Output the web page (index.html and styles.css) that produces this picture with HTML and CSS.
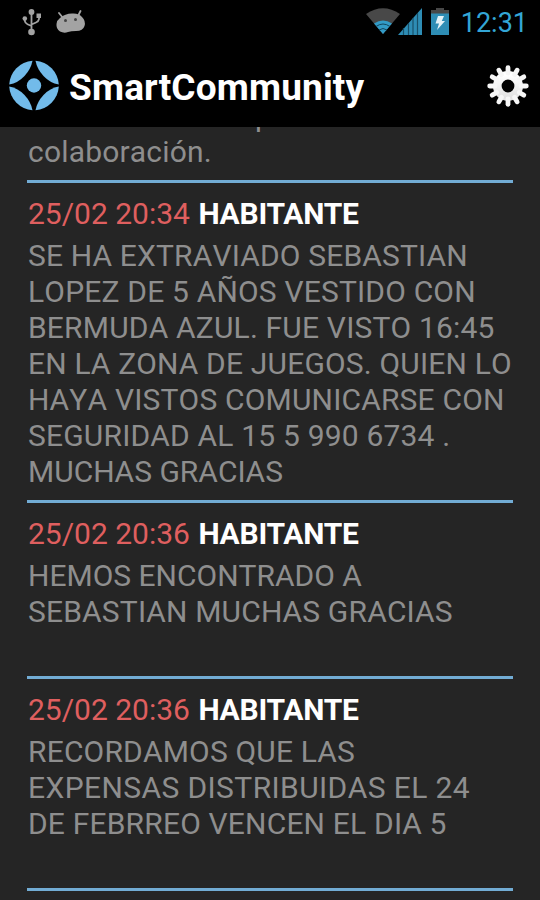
FILE: index.html
```html
<!DOCTYPE html>
<html lang="es">
<head>
    <meta charset="UTF-8">
    <meta name="viewport" content="width=device-width, initial-scale=1.0">
    <title>SmartCommunity</title>
    <link rel="stylesheet" href="styles.css">
</head>
<body>

<div class="status-bar">
    <div class="notifications">
        <svg class="usb" width="20" height="28" viewBox="0 0 20 28" fill="none" stroke="#a3a3a3" stroke-width="1.8">
            <path d="M9.500 4V24M2.800 11V13Q3 15 5.500 16.200L9.500 18M17 8V11Q16.500 13.500 14 14.500L9.500 16.500"/>
            <circle cx="9.500" cy="24" r="3.300" fill="#a3a3a3" stroke="none"/>
            <circle cx="9.500" cy="4" r="2.900" fill="#a3a3a3" stroke="none"/>
            <circle cx="2.800" cy="10.500" r="2.300" fill="#a3a3a3" stroke="none"/>
            <path d="M14.500 5.500H19V10H14.500Z" fill="#a3a3a3" stroke="none"/>
        </svg>
        <svg class="droid" width="30" height="24" viewBox="0 0 30 24">
            <path d="M3 3L7 8M24.500 1L21.500 7" stroke="#a3a3a3" stroke-width="1.800" stroke-linecap="round"/>
            <path d="M4 8Q9 3.500 16 3.500Q23 3 26 7Q30 11 28.500 16Q27 21 20 21Q15 21 12 22Q8 23.500 4 21.500Q0 19 .5 14Q1 10 4 8Z" fill="#a3a3a3"/>
            <circle cx="9.500" cy="10.500" r="1.500" fill="#444"/>
            <circle cx="19.500" cy="9.500" r="1.500" fill="#444"/>
        </svg>
    </div>
    <div class="system">
        <svg class="wifi" width="34" height="26" viewBox="0 0 34 26">
            <path d="M0 6Q17 -5.500 34 6L17 26Z" fill="#484848"/>
            <path d="M8 15.500Q17 9.500 26 15.500L17 26Z" fill="#329bc7"/>
            <path d="M10 18.500Q17 13.500 24 18.500M13 22Q17 19 21 22" fill="none" stroke="#12455c" stroke-width="1"/>
        </svg>
        <svg class="signal" width="24" height="27" viewBox="0 0 24 27">
            <path d="M0 27L24 0V27Z" fill="#2e8db5"/>
            <path d="M5.500 20V27M10.500 15V27M15 10V27M19.500 5V27" stroke="#185069" stroke-width="1.200"/>
        </svg>
        <svg class="battery" width="18" height="27" viewBox="0 0 18 27">
            <path d="M5 0H13V2H18V6H0V2H5Z" fill="#484848"/>
            <path d="M0 5.500H18V27H0Z" fill="#2e8db5"/>
            <path d="M7 8H13L10.800 13H14L6 22L8 15.500H4.500Z" fill="#e4f2f8"/>
        </svg>
        <span class="clock">12:31</span>
    </div>
</div>

<header>
    <svg class="logo" width="52" height="52" viewBox="0 0 52 52" fill="#72bbea">
        <path d="M24.500 .8A25.200 25.200 0 0 0 1.200 24.500Q10 23 16.500 16T24.500 .8Z"/>
        <path d="M27.500 .8A25.200 25.200 0 0 1 50.800 24.500Q42 23 35.500 16T27.500 .8Z"/>
        <path d="M24.500 50.200A25.200 25.200 0 0 1 1.200 26.500Q10 28 16.500 35T24.500 50.200Z"/>
        <path d="M27.500 50.200A25.200 25.200 0 0 0 50.800 26.500Q42 28 35.500 35T27.500 50.200Z"/>
        <circle cx="26" cy="25.500" r="7.200"/>
    </svg>
    <h1>SmartCommunity</h1>
    <svg class="gear" width="42" height="42" viewBox="-21 -21 42 42">
        <defs>
            <linearGradient id="metal" x1="0" y1="0" x2="0" y2="1">
                <stop offset="0" stop-color="#fff"/>
                <stop offset="1" stop-color="#e2e2e2"/>
            </linearGradient>
        </defs>
        <circle r="10.700" fill="none" stroke="url(#metal)" stroke-width="8.600"/>
        <g stroke="#f6f6f6" stroke-width="4.800" stroke-linecap="round">
            <path d="M0 -13V-18.300"/>
            <path d="M0 -13V-18.300" transform="rotate(30)"/>
            <path d="M0 -13V-18.300" transform="rotate(60)"/>
            <path d="M0 -13V-18.300" transform="rotate(90)"/>
            <path d="M0 -13V-18.300" transform="rotate(120)"/>
            <path d="M0 -13V-18.300" transform="rotate(150)"/>
            <path d="M0 -13V-18.300" transform="rotate(180)"/>
            <path d="M0 -13V-18.300" transform="rotate(210)"/>
            <path d="M0 -13V-18.300" transform="rotate(240)"/>
            <path d="M0 -13V-18.300" transform="rotate(270)"/>
            <path d="M0 -13V-18.300" transform="rotate(300)"/>
            <path d="M0 -13V-18.300" transform="rotate(330)"/>
        </g>
    </svg>
</header>

<div class="messages">
    <div class="message first">
        <p><span class="cut">p</span><br>colaboración.</p>
    </div>
    <div class="message">
        <h2><span class="date">25/02 20:34</span> <span class="author">HABITANTE</span></h2>
        <p>SE HA EXTRAVIADO SEBASTIAN<br>LOPEZ DE 5 AÑOS VESTIDO CON<br>BERMUDA AZUL. FUE VISTO 16:45<br>EN LA ZONA DE JUEGOS. QUIEN LO<br>HAYA VISTOS COMUNICARSE CON<br>SEGURIDAD AL 15 5 990 6734 .<br><span class="tight">MUCHAS GRACIAS</span></p>
    </div>
    <div class="message short">
        <h2><span class="date">25/02 20:36</span> <span class="author">HABITANTE</span></h2>
        <p><span class="tight">HEMOS ENCONTRADO A</span><br>SEBASTIAN MUCHAS GRACIAS</p>
    </div>
    <div class="message short">
        <h2><span class="date">25/02 20:36</span> <span class="author">HABITANTE</span></h2>
        <p>RECORDAMOS QUE LAS<br><span class="wide">EXPENSAS DISTRIBUIDAS EL 24</span><br>DE FEBRREO VENCEN EL DIA 5</p>
    </div>
</div>

</body>
</html>
```
FILE: styles.css
```css
body {
    font-family: Roboto, "Liberation Sans", sans-serif;
    margin: 0;
    height: 900px;
    overflow: hidden;
    background-color: #252525;
    color: #8e8e8e;
}
.status-bar {
    display: flex;
    justify-content: space-between;
    height: 44px;
    background-color: #000;
}
.notifications, .system {
    display: flex;
    align-items: flex-start;
}
.notifications {
    padding: 8px 0 0 22px;
    gap: 14px;
}
.droid {
    margin-top: 2px;
}
.system {
    padding: 8px 12px 0 0;
}
.wifi {
    margin-right: -2px;
}
.battery {
    margin-left: 9px;
}
.clock {
    margin-left: 12px;
    font-size: 27px;
    font-weight: 400;
    line-height: 31px;
    color: #33a6d6;
}
header {
    display: flex;
    align-items: center;
    height: 83px;
    padding: 0 11px 0 8px;
    background-color: #000;
}
h1 {
    flex: 1;
    margin: 4px 0 0 9px;
    font-size: 37px;
    line-height: 44px;
    letter-spacing: 0.15px;
    color: #fff;
}
.messages {
    height: 773px;
    padding: 0 27px;
    overflow: hidden;
}
.message {
    box-sizing: border-box;
    padding: 13px 0 10px 1px;
    border-bottom: 3px solid #72acd4;
}
.message.first {
    margin-top: -29px;
    padding-top: 0;
}
.message.short {
    padding-bottom: 46px;
}
h2 {
    margin: 0 0 6px;
    font-size: 30px;
    font-weight: 400;
    line-height: 36px;
}
.date {
    color: #df5f5f;
}
.author {
    margin-left: 1px;
    font-weight: 700;
    letter-spacing: -0.25px;
    color: #fff;
}
p {
    margin: 0;
    font-size: 30px;
    line-height: 36px;
    letter-spacing: 0.18px;
    font-kerning: none;
    white-space: nowrap;
}
.tight {
    letter-spacing: 0;
}
.wide {
    letter-spacing: 0.4px;
}
.cut {
    margin-left: 227px;
}
```
